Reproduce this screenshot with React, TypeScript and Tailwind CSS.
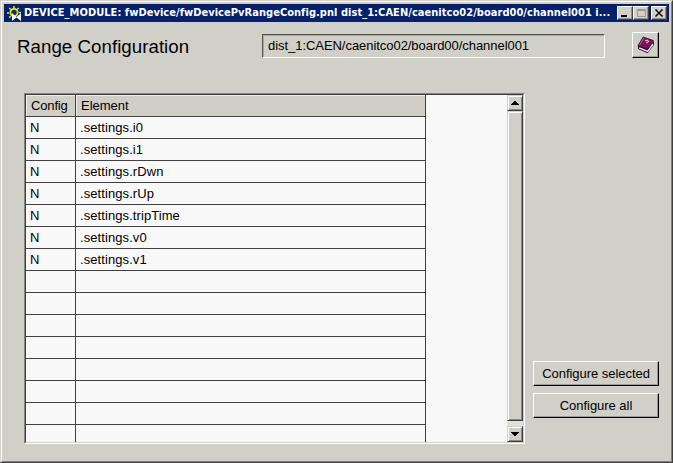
import React from "react";

const elements = [".settings.i0", ".settings.i1", ".settings.rDwn", ".settings.rUp", ".settings.tripTime", ".settings.v0", ".settings.v1"];
const rows = Array.from({ length: 15 }, (_, i) => elements[i] ?? "");

function SunIcon() {
  return (
    <svg width="16" height="17" viewBox="0 0 16 17" className="shrink-0">
      <circle cx="7" cy="7.5" r="3.6" fill="#1a2a50" stroke="#e6ea2c" strokeWidth="1.7" />
      <path d="M7 1v2M2.2 3l1.5 1.4M11.8 3l-1.5 1.4M0 8h2.2M11.8 7.5H14M2.2 12.6l1.5-1.4" stroke="#e6ea2c" strokeWidth="1.5" fill="none" />
      <path d="M5 8l4.5 4L14 8v8l-4.5-3.6L5 16z" fill="#f4f6ff" />
    </svg>
  );
}

function BookIcon() {
  return (
    <svg width="18" height="18" viewBox="0 0 18 18">
      <path d="M1 9.5v3.6l9.6 4.2 6.4-8.6V5l-6.2 7.8z" fill="#2b1028" />
      <path d="M2.2 11.8l8.4 3.6 5.4-7.4" fill="none" stroke="#f6f2f5" strokeWidth="1.3" />
      <path d="M1 9.6 6.2 1l10.3 3.6-6 8.8z" fill="#7a1060" stroke="#300824" strokeWidth="0.8" />
      <path d="M2.4 9.4 7 2" fill="none" stroke="#b890b0" strokeWidth="0.7" />
      <path d="M7.8 4.8 10.4 4.2l1.2 1.2-1.6 1.2-1-.2" fill="none" stroke="#f4a8a0" strokeWidth="1.1" />
    </svg>
  );
}

function CaptionButton({ children }: { children: React.ReactNode }) {
  return (
    <button className="h-[14px] w-4 border border-t-white border-l-white border-r-[#404040] border-b-[#404040] bg-[#d4d0c8] shadow-[inset_-1px_-1px_#909090]">
      <svg width="14" height="12" viewBox="0 0 14 12" className="block">{children}</svg>
    </button>
  );
}

function ScrollButton({ d }: { d: string }) {
  return (
    <div className="h-4 w-4 shrink-0 border border-t-[#d0d0c8] border-l-[#d0d0c8] border-r-[#404040] border-b-[#404040] bg-[#d0d0c8] shadow-[inset_1px_1px_#fff,inset_-1px_-1px_#888]">
      <svg width="14" height="14" viewBox="0 0 14 14" shapeRendering="crispEdges" className="block"><path d={d} /></svg>
    </div>
  );
}

function PushButton({ children }: { children: React.ReactNode }) {
  return (
    <button className="flex h-[25px] w-[126px] items-center justify-center border border-t-white border-l-white border-r-black border-b-black text-[13px] tracking-[-0.04px] shadow-[inset_-1px_-1px_#999]">
      {children}
    </button>
  );
}

export default function App() {
  return (
    <div className="h-[463px] w-[673px] overflow-hidden border border-t-[#d4d0c8] border-l-[#d4d0c8] border-r-[#404040] border-b-[#404040] bg-[#d0d0c8] font-['Liberation_Sans',Arial,sans-serif] text-[13px] text-black">
      <div className="flex h-[461px] flex-col border border-t-white border-l-white border-r-[#808080] border-b-[#808080] px-0.5 pt-0.5">
        <header className="flex h-[18px] shrink-0 items-center bg-[#05206c] pr-0.5 pl-[3px] text-white">
          <SunIcon />
          <h1 className="ml-px w-[590px] overflow-hidden font-['DejaVu_Sans_Condensed','DejaVu_Sans',sans-serif] text-[11px] leading-[18px] font-bold tracking-[0.04px] whitespace-nowrap">
            DEVICE_MODULE: fwDevice/fwDevicePvRangeConfig.pnl dist_1:CAEN/caenitco02/board00/channel001 i...
          </h1>
          <div className="ml-auto flex">
            <CaptionButton><path d="M3 8h6v2H3z" /></CaptionButton>
            <CaptionButton><path d="M3.5 2.5h8v7h-8zM3 3.5h9" fill="none" stroke="#999" /></CaptionButton>
            <div className="ml-0.5 flex"><CaptionButton><path d="m3.5 2.5 7 7m0-7-7 7" fill="none" stroke="#000" strokeWidth="1.5" /></CaptionButton></div>
          </div>
        </header>

        <section className="flex h-[71px] shrink-0 pt-[10px] pl-[13px]">
          <h2 className="w-[245px] text-[18.7px] leading-[29px] tracking-[0.04px]">Range Configuration</h2>
          <div className="mt-[2px] h-6 w-[343px] border border-t-[#55554f] border-l-[#55554f] border-r-white border-b-white pl-[5px] leading-[22px] tracking-[-0.05px] shadow-[inset_1px_1px_#aaa9a3]">
            dist_1:CAEN/caenitco02/board00/channel001
          </div>
          <button className="ml-[27px] flex h-[26px] w-[27px] items-center justify-center border border-t-white border-l-white border-r-black border-b-black shadow-[inset_-1px_-1px_#999]"><BookIcon /></button>
        </section>

        <main className="flex pl-5">
          <div className="h-[351px] w-[501px] border border-t-[#85857f] border-l-[#85857f] border-r-white border-b-white">
            <div className="flex h-[349px] overflow-hidden border border-t-[#404040] border-l-[#404040] border-r-[#d0d0c8] border-b-[#d0d0c8] bg-[#f8f8f8]">
              <div className="grid w-[400px] auto-rows-[22px] grid-cols-[50px_350px]">
                <div className="h-[22px] border-r border-b border-[#404040] bg-[#d0d0c8] pl-[5px] leading-[22px] tracking-[-0.15px] shadow-[inset_1px_1px_#eee]">Config</div>
                <div className="h-[22px] border-r border-b border-[#404040] bg-[#d0cec6] pl-[5px] leading-[22px] shadow-[inset_1px_1px_#eee]">Element</div>
                {rows.map((name, i) => (
                  <React.Fragment key={i}>
                    <div className="border-r border-b border-[#404040] pl-1 leading-[22px]">{name && "N"}</div>
                    <div className="border-r border-b border-[#404040] pl-1 leading-[22px] tracking-[0.08px]">{name}</div>
                  </React.Fragment>
                ))}
              </div>
              <div className="ml-auto flex w-4 flex-col bg-[#e2e2dc]">
                <ScrollButton d="M6 5h2v1h1v1h1v1h1v1H3V8h1V7h1V6h1z" />
                <div className="h-[310px] border border-t-[#d0d0c8] border-l-[#d0d0c8] border-r-[#404040] border-b-[#404040] bg-[#d0d0c8] shadow-[inset_1px_1px_#fff,inset_-1px_-1px_#888]" />
                <div className="h-[5px]" />
                <ScrollButton d="M3 5h8v1h-1v1H9v1H8v1H6V8H5V7H4V6H3z" />
              </div>
            </div>
          </div>
          <aside className="flex flex-col gap-[7px] pt-[268px] pl-2">
            <PushButton>Configure selected</PushButton>
            <PushButton>Configure all</PushButton>
          </aside>
        </main>
      </div>
    </div>
  );
}
